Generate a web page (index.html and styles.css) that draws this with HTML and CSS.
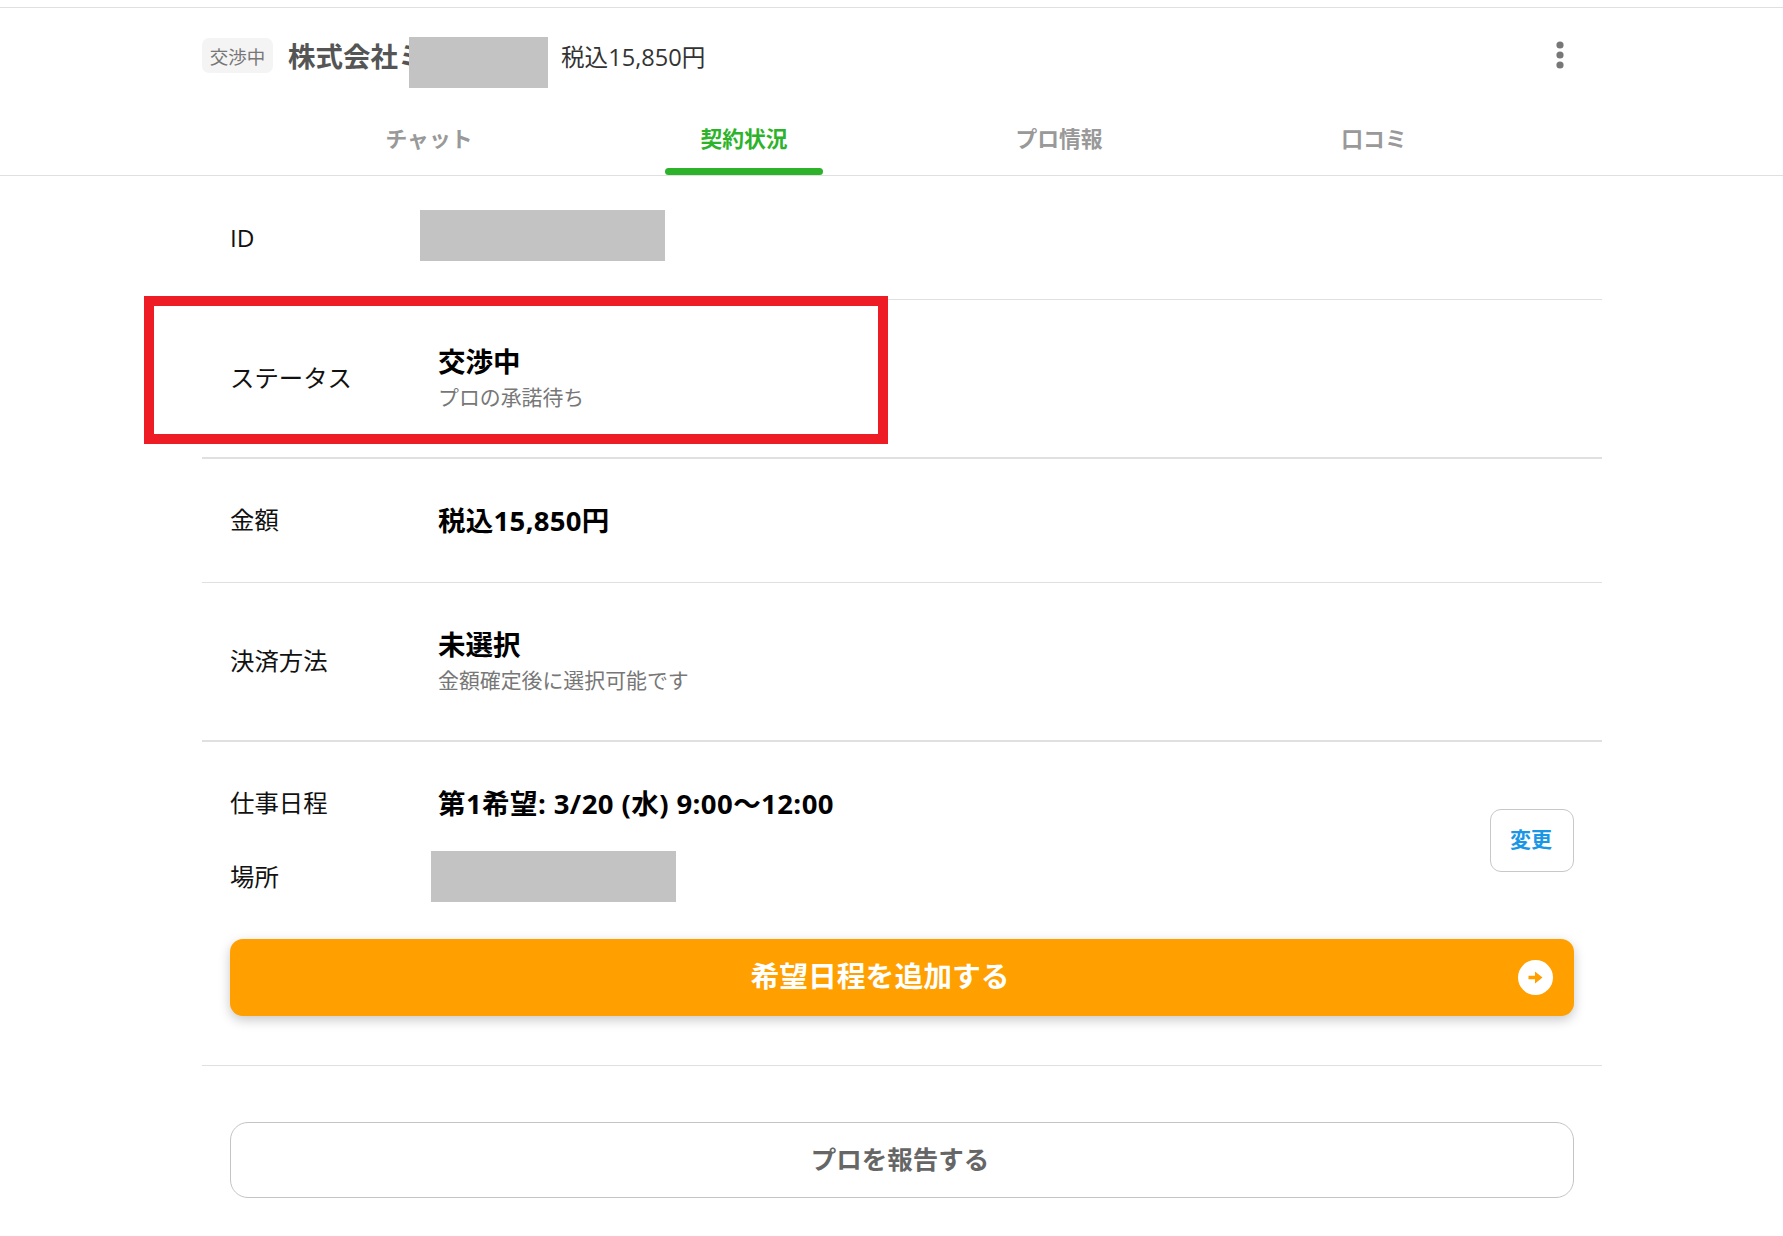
FILE: index.html
```html
<!DOCTYPE html>
<html lang="ja">
<head>
<meta charset="utf-8">
<title>契約状況</title>
<link rel="stylesheet" href="styles.css">
</head>
<body>
<header class="head">
  <div class="head-row">
    <span class="badge">交渉中</span>
    <span class="title">株式会社ミ</span>
    <span class="mask mask-title"></span>
    <span class="price">税込15,850円</span>
    <svg class="more" width="8" height="28" viewBox="0 0 8 28" aria-hidden="true"><circle cx="4" cy="4" r="3.6"/><circle cx="4" cy="14" r="3.6"/><circle cx="4" cy="24" r="3.6"/></svg>
  </div>
  <nav class="tabs">
    <a class="tab">チャット</a>
    <a class="tab tab-on">契約状況</a>
    <a class="tab">プロ情報</a>
    <a class="tab">口コミ</a>
  </nav>
</header>
<main class="panel">
  <section class="row row-id">
    <div class="label">ID</div>
    <span class="mask mask-id"></span>
  </section>
  <section class="row row-status">
    <div class="label label-up">ステータス</div>
    <div class="stack">
      <div class="value">交渉中</div>
      <div class="sub">プロの承諾待ち</div>
    </div>
    <div class="highlight"></div>
  </section>
  <section class="row row-price">
    <div class="label label-up">金額</div>
    <div class="value value-num">税込15,850円</div>
  </section>
  <section class="row row-pay">
    <div class="label label-up">決済方法</div>
    <div class="stack">
      <div class="value">未選択</div>
      <div class="sub">金額確定後に選択可能です</div>
    </div>
  </section>
  <section class="sched">
    <div class="sched-top">
      <div class="sched-info">
        <div class="sched-line">
          <div class="label">仕事日程</div>
          <div class="value value-long">第1希望: 3/20 (水) 9:00〜12:00</div>
        </div>
        <div class="sched-line sched-place">
          <div class="label">場所</div>
          <span class="mask mask-place"></span>
        </div>
      </div>
      <button class="change">変更</button>
    </div>
    <button class="add">希望日程を追加する
      <span class="add-icon"><svg width="15" height="13" viewBox="0 0 15 13" aria-hidden="true"><path d="M0.500 4.700h6.500V0.500L14.500 6.500 7 12.500V8.300H0.500z"/></svg></span>
    </button>
  </section>
  <section class="report-wrap">
    <button class="report">プロを報告する</button>
  </section>
</main>
</body>
</html>
```
FILE: styles.css
```css
* { box-sizing: border-box; }
html, body { margin: 0; padding: 0; background: #fff; }
body {
  height: 1236px;
  overflow: hidden;
  padding-top: 7px;
  font-family: "Open Sans", "Noto Sans CJK JP", sans-serif;
  color: #000;
}
.head { border-top: 1px solid #e0e0e0; border-bottom: 1px solid #e0e0e0; height: 169px; }
.head-row {
  position: relative;
  width: 1400px;
  margin-left: 202px;
  height: 97px;
  display: flex;
  align-items: center;
}
.badge {
  width: 71px;
  height: 35px;
  margin-top: -2px;
  background: #f4f4f4;
  border-radius: 7px;
  color: #777;
  font-size: 18.5px;
  line-height: 37px;
  text-align: center;
}
.title {
  margin-left: 15px;
  width: 273px;
  overflow: hidden;
  white-space: nowrap;
  color: #555;
  font-size: 27.500px;
  font-weight: 700;
  line-height: 40px;
}
.price { font-size: 23.600px; line-height: 36px; color: #333; }
.more { position: absolute; right: 38px; top: 33px; fill: #777; }
.mask { display: block; background: #c3c3c3; }
.mask-title { position: absolute; left: 207px; top: 29px; width: 139px; height: 51px; }
.tabs { display: flex; margin-left: 272px; width: 1260px; height: 71px; }
.tab {
  flex: 1;
  position: relative;
  text-align: center;
  color: #999;
  font-size: 21.800px;
  font-weight: 700;
  line-height: 32px;
  padding: 18px 1px 0 0;
}
.tab-on { color: #2db32a; }
.tab-on::after {
  content: "";
  position: absolute;
  left: 78px;
  right: 79px;
  bottom: 1px;
  height: 7px;
  background: #2db32a;
  border-radius: 4px;
}
.panel { width: 1400px; margin-left: 202px; }
.row {
  display: flex;
  align-items: center;
  position: relative;
  padding-left: 28px;
  border-bottom: 1px solid #e0e0e0;
}
.row-id { height: 124px; align-items: flex-start; padding-top: 34px; }
.row-status { height: 159px; }
.row-price { height: 124px; }
.row-pay { height: 159px; }
.row-status, .row-pay { border-bottom-width: 2px; }
.label { width: 208px; flex: none; font-size: 24.400px; line-height: 36px; color: #111; }
.label-up { margin-top: -2px; }
.row-id .label { width: 190px; padding-top: 10px; }
.stack { margin-top: -2px; }
.value { font-size: 27.500px; font-weight: 700; line-height: 38px; }
.value-num { letter-spacing: .3px; }
.value-long { letter-spacing: .42px; margin-top: 2px; }
.sub { font-size: 20.900px; line-height: 30px; color: #777; margin-top: 1px; }
.mask-id { width: 245px; height: 51px; }
.highlight {
  position: absolute;
  left: -58px;
  top: -4px;
  width: 744px;
  height: 148px;
  border: 10px solid #ee1c25;
}
.sched { height: 324px; border-bottom: 1px solid #e0e0e0; padding: 0 28px; }
.sched-top { display: flex; justify-content: space-between; height: 198px; }
.sched-info { padding-top: 42px; }
.sched-line { display: flex; align-items: center; height: 38px; }
.sched-place { margin-top: 36px; }
.mask-place { width: 245px; height: 51px; margin-left: -7px; margin-top: -1px; }
.change {
  width: 84px;
  height: 63px;
  margin-top: 67px;
  padding: 0 2px 5px 0;
  background: #fff;
  border: 1px solid #c8c8c8;
  border-radius: 11px;
  color: #1a96e6;
  font-family: inherit;
  font-size: 21px;
  font-weight: 700;
}
.add {
  position: relative;
  display: block;
  width: 100%;
  height: 77px;
  margin-top: -1px;
  padding: 0 44px 6px 0;
  background: #ff9f00;
  border: 0;
  border-radius: 13px;
  box-shadow: 0 4px 12px rgba(0, 0, 0, .22);
  color: #fff;
  font-family: inherit;
  font-size: 28.800px;
  font-weight: 700;
  text-align: center;
}
.add-icon {
  position: absolute;
  right: 21px;
  top: 21px;
  width: 35px;
  height: 35px;
  border-radius: 50%;
  background: #fff;
  display: flex;
  align-items: center;
  justify-content: center;
  fill: #ff9f00;
}
.report-wrap { padding: 56px 28px 0; }
.report {
  display: block;
  width: 100%;
  height: 76px;
  padding: 0 4px 5px 0;
  background: #fff;
  border: 1px solid #c4c4c4;
  border-radius: 18px;
  color: #666;
  font-family: inherit;
  font-size: 25.500px;
  font-weight: 700;
}
```
